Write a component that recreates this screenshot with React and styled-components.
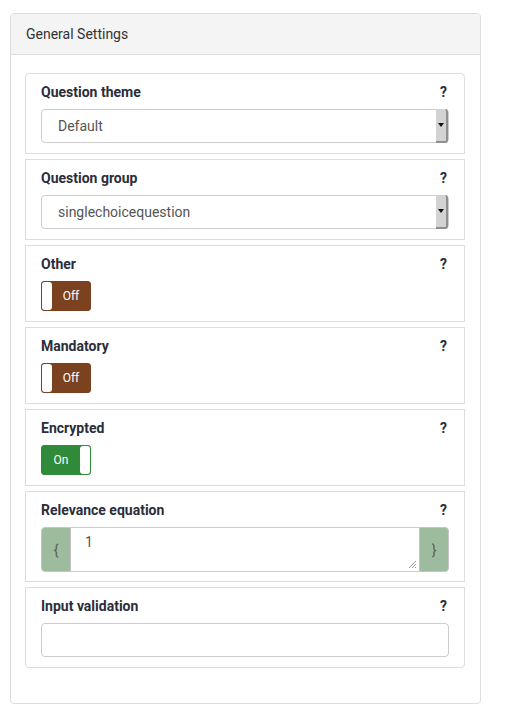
import React from 'react'
import styled, { createGlobalStyle } from 'styled-components'

const GlobalStyle = createGlobalStyle`
  body {
    margin: 0;
    background: #fff;
    font-family: Roboto, "Liberation Sans", Arial, sans-serif;
    color: #333;
  }
`

const Panel = styled.div`
  width: 471px;
  margin: 13px 0 0 10px;
  box-sizing: border-box;
  border: 1px solid #ddd;
  border-radius: 4px;
  background: #fff;
`

const PanelHeading = styled.div`
  height: 40px;
  display: flex;
  align-items: center;
  padding: 0 15px;
  background: #f4f4f4;
  border-bottom: 1px solid #ddd;
  border-radius: 3px 3px 0 0;
  font-size: 14px;
  color: #333;
`

const PanelBody = styled.div`
  padding: 18px 15px 35px 14px;
`

const List = styled.div`
  display: flex;
  flex-direction: column;
  gap: 5px;
`

const Item = styled.div`
  border: 1px solid #ddd;
  padding: 8px 15px ${p => p.$pb || 10}px;
  display: flex;
  flex-direction: column;
  gap: 7px;

  &:first-child {
    border-radius: 4px 4px 0 0;
  }
  &:last-child {
    border-radius: 0 0 4px 4px;
  }
`

const LabelRow = styled.div`
  display: flex;
  justify-content: space-between;
  align-items: center;
  height: 20px;
  font-size: 14px;
  font-weight: 700;
  color: #2b2d3a;
`

const Help = styled.span`
  margin-right: 2px;
  font-weight: 700;
  color: #2b2d3a;
`

const Select = styled.div`
  position: relative;
  height: 34px;
  box-sizing: border-box;
  border: 1px solid #ccc;
  border-radius: 4px;
  display: flex;
  align-items: center;
  padding-left: 16px;
  font-size: 14px;
  color: #555;
`

const SelectArrow = styled.span`
  position: absolute;
  right: 0;
  top: -1px;
  bottom: -1px;
  width: 10px;
  background: #d3d3d3;
  border-right: 2px solid #8f8f8f;
  border-bottom: 2px solid #8f8f8f;
  border-radius: 0 3px 3px 0;
  display: flex;
  align-items: center;
  justify-content: center;

  &::after {
    content: '';
    border-left: 3px solid transparent;
    border-right: 3px solid transparent;
    border-top: 4px solid #111;
  }
`

const Toggle = styled.div`
  width: 50px;
  height: 30px;
  box-sizing: border-box;
  border: 1px solid ${p => p.$color};
  border-radius: 3px;
  background: ${p => p.$color};
  display: flex;
  flex-direction: ${p => (p.$on ? 'row' : 'row-reverse')};
  overflow: hidden;
`

const ToggleText = styled.span`
  flex: 1;
  display: flex;
  align-items: center;
  justify-content: center;
  font-size: 12px;
  color: #fff;
`

const ToggleHandle = styled.span`
  width: 10px;
  background: #fff;
  border-radius: ${p => (p.$on ? '3px 2px 2px 3px' : '2px 3px 3px 2px')};
`

const InputGroup = styled.div`
  display: flex;
  height: 45px;
`

const Addon = styled.span`
  width: 30px;
  box-sizing: border-box;
  background: #9dbb9d;
  border: 1px solid #c5c5c5;
  border-radius: ${p => (p.$side === 'left' ? '4px 0 0 4px' : '0 4px 4px 0')};
  display: flex;
  align-items: center;
  justify-content: center;
  font-size: 14px;
  color: #5a5a5a;
`

const TextArea = styled.div`
  position: relative;
  flex: 1;
  border-top: 1px solid #ccc;
  border-bottom: 1px solid #ccc;
  padding: 6px 14px;
  font-size: 14px;
  color: #555;
`

const Grip = styled.svg`
  position: absolute;
  right: 2px;
  bottom: 2px;
`

const TextInput = styled.div`
  height: 34px;
  box-sizing: border-box;
  border: 1px solid #ccc;
  border-radius: 4px;
`

function Label({ children }) {
  return (
    <LabelRow>
      <span>{children}</span>
      <Help>?</Help>
    </LabelRow>
  )
}

function Switch({ on }) {
  const color = on ? '#2f8b3a' : '#7c4220'
  return (
    <Toggle $on={on} $color={color}>
      <ToggleText>{on ? 'On' : 'Off'}</ToggleText>
      <ToggleHandle $on={on} />
    </Toggle>
  )
}

export default function App() {
  return (
    <>
      <GlobalStyle />
      <Panel>
        <PanelHeading>General Settings</PanelHeading>
        <PanelBody>
          <List>
            <Item>
              <Label>Question theme</Label>
              <Select>
                Default
                <SelectArrow />
              </Select>
            </Item>
            <Item>
              <Label>Question group</Label>
              <Select>
                singlechoicequestion
                <SelectArrow />
              </Select>
            </Item>
            <Item>
              <Label>Other</Label>
              <Switch on={false} />
            </Item>
            <Item>
              <Label>Mandatory</Label>
              <Switch on={false} />
            </Item>
            <Item>
              <Label>Encrypted</Label>
              <Switch on />
            </Item>
            <Item $pb={9}>
              <Label>Relevance equation</Label>
              <InputGroup>
                <Addon $side="left">{'{'}</Addon>
                <TextArea>
                  1
                  <Grip width="9" height="9" viewBox="0 0 9 9">
                    <path d="M8 1L1 8M8 4L4 8M8 7L7 8" stroke="#999" strokeWidth="1" />
                  </Grip>
                </TextArea>
                <Addon $side="right">{'}'}</Addon>
              </InputGroup>
            </Item>
            <Item>
              <Label>Input validation</Label>
              <TextInput />
            </Item>
          </List>
        </PanelBody>
      </Panel>
    </>
  )
}
